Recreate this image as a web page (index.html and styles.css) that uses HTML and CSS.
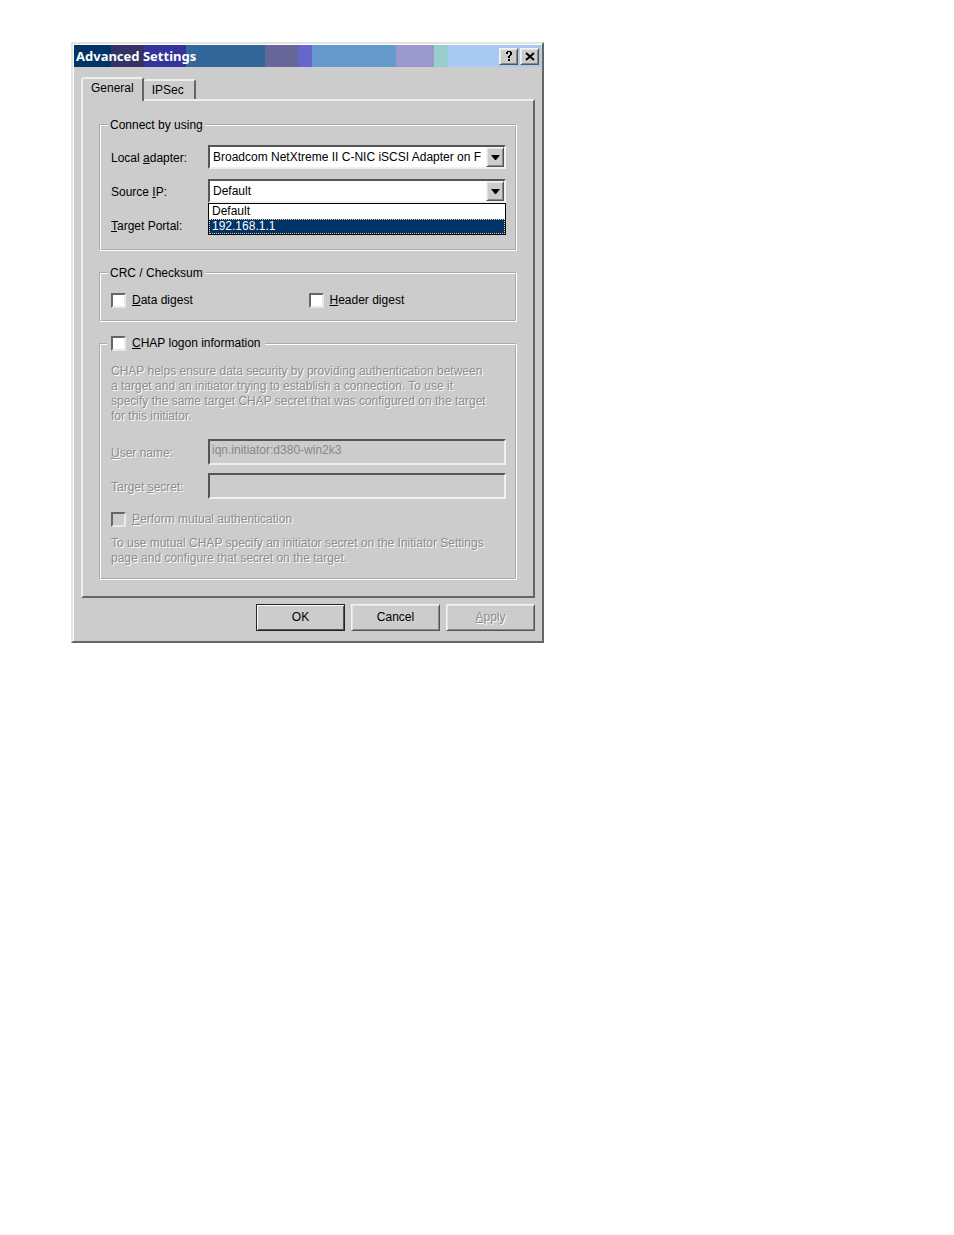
FILE: index.html
```html
<!DOCTYPE html>
<html lang="en">

<head>
    <meta charset="UTF-8">
    <meta name="viewport" content="width=device-width, initial-scale=1.0">
    <title>Advanced Settings</title>
    <link rel="stylesheet" href="styles.css">
</head>

<body>
    <form class="window" onsubmit="return false">
        <header class="titlebar">
            <h1 class="title">Advanced Settings</h1>
            <button type="button" class="title-btn" aria-label="Help">
                <svg width="8" height="11" viewBox="0 0 8 11" shape-rendering="crispEdges"><path d="M1 1h1V0h4v1h1v3H6v1H5v2H3V5h1V4h1V1H3v2H1zM3 8h2v2H3z"/></svg>
            </button>
            <button type="button" class="title-btn" aria-label="Close">
                <svg width="10" height="9" viewBox="0 0 10 9"><path d="M1 1l8 7M9 1L1 8" fill="none" stroke="#000" stroke-width="2"/></svg>
            </button>
        </header>

        <main class="content">
            <div class="tabs" role="tablist">
                <button type="button" class="tab active" role="tab" aria-selected="true">General</button>
                <button type="button" class="tab" role="tab" aria-selected="false">IPSec</button>
            </div>

            <div class="panel" role="tabpanel">
                <fieldset class="group">
                    <legend>Connect by using</legend>
                    <div class="fields connect">
                        <label for="adapter">Local <u>a</u>dapter:</label>
                        <div class="combo">
                            <select id="adapter">
                                <option>Broadcom NetXtreme II C-NIC iSCSI Adapter on F</option>
                            </select>
                            <span class="arrow"><svg width="9" height="5" viewBox="0 0 9 5"><path d="M0 0h9L5 5H4z"/></svg></span>
                        </div>
                        <label for="source">Source <u>I</u>P:</label>
                        <div class="combo">
                            <select id="source">
                                <option>Default</option>
                            </select>
                            <span class="arrow"><svg width="9" height="5" viewBox="0 0 9 5"><path d="M0 0h9L5 5H4z"/></svg></span>
                            <ul class="list" role="listbox" aria-label="Source IP">
                                <li role="option" aria-selected="false">Default</li>
                                <li class="selected" role="option" aria-selected="true">192.168.1.1</li>
                            </ul>
                        </div>
                        <span><u>T</u>arget Portal:</span>
                    </div>
                </fieldset>

                <fieldset class="group">
                    <legend>CRC / Checksum</legend>
                    <div class="checks">
                        <label class="check"><input type="checkbox"><span><u>D</u>ata digest</span></label>
                        <label class="check"><input type="checkbox"><span><u>H</u>eader digest</span></label>
                    </div>
                </fieldset>

                <fieldset class="group">
                    <legend class="check-legend">
                        <label class="check"><input type="checkbox"><span><u>C</u>HAP logon information</span></label>
                    </legend>
                    <p class="disabled">CHAP helps ensure data security by providing authentication between<br>
                        a target and an initiator trying to establish a connection. To use it<br>
                        specify the same target CHAP secret that was configured on the target<br>
                        for this initiator.</p>
                    <div class="fields chap">
                        <label class="disabled" for="user"><u>U</u>ser name:</label>
                        <input type="text" id="user" value="iqn.initiator:d380-win2k3" disabled>
                        <label class="disabled" for="secret">Target <u>s</u>ecret:</label>
                        <input type="password" id="secret" disabled>
                    </div>
                    <label class="check disabled mutual"><input type="checkbox" disabled><span><u>P</u>erform mutual authentication</span></label>
                    <p class="disabled">To use mutual CHAP specify an initiator secret on the Initiator Settings<br>
                        page and configure that secret on the target.</p>
                </fieldset>
            </div>

            <footer class="buttons">
                <button type="submit" class="btn default">OK</button>
                <button type="button" class="btn">Cancel</button>
                <button type="button" class="btn disabled" disabled><u>A</u>pply</button>
            </footer>
        </main>
    </form>
</body>

</html>
```
FILE: styles.css
```css
* {
    margin: 0;
    padding: 0;
    box-sizing: border-box;
}

body {
    background-color: #fff;
    color: #000;
    font: 12px/15px "Liberation Sans", Arial, sans-serif;
    padding: 42px 71px;
}

button,
input,
select {
    font: inherit;
    color: inherit;
    border-radius: 0;
    appearance: none;
    outline: none;
}

.window {
    max-width: 473px;
    padding: 1px;
    background-color: #ccc;
    border: 2px solid;
    border-color: #e4e4e0 #666 #666 #e4e4e0;
    box-shadow: inset 1px 1px #fff;
}

/* title bar */
.titlebar {
    display: flex;
    align-items: center;
    gap: 2px;
    height: 22px;
    padding: 0 2px;
    background: linear-gradient(to right,
        #003366 0 8%, #333366 8% 15%, #333399 15% 24%, #336699 24% 41%,
        #666699 41% 48%, #6666cc 48% 51%, #6699cc 51% 69%,
        #9999cc 69% 77%, #99cccc 77% 80%, #a6caf0 80%);
}

.title {
    flex: 1;
    color: #fff;
    font: bold 13px/22px "Noto Sans", Tahoma, sans-serif;
}

.title-btn {
    display: flex;
    align-items: center;
    justify-content: center;
    width: 19px;
    height: 17px;
}

.title-btn,
.btn,
.arrow {
    background-color: #ccc;
    border: 1px solid;
    border-color: #f4f4f4 #555 #555 #f4f4f4;
    box-shadow: inset 1px 1px #e4e4e4, inset -1px -1px #888;
}

.content {
    padding: 10px 6px 9px 7px;
}

/* tabs */
.tabs {
    display: flex;
    align-items: flex-end;
}

.tab {
    height: 20px;
    padding: 0 10px 0 8px;
    background-color: #ccc;
    border: 2px solid;
    border-color: #eee #666 #ccc #eee;
    border-bottom: none;
    border-radius: 3px 2px 0 0;
}

.tab + .tab {
    border-left: none;
}

.tab.active {
    position: relative;
    height: 24px;
    margin-bottom: -2px;
    padding: 0 8px 4px;
}

.panel {
    display: flex;
    flex-direction: column;
    gap: 14px;
    padding: 16px;
    border: 2px solid;
    border-color: #eee #666 #666 #eee;
}

/* group boxes */
.group {
    min-width: 0;
    padding: 12px 9px 12px 10px;
    border: 2px groove #fff;
}

legend {
    height: 16px;
    margin-left: -3px;
    padding: 0 2px;
    line-height: 17px;
}

.check-legend {
    margin-left: -4px;
    padding: 0 4px;
}

.fields {
    display: grid;
    grid-template-columns: 97px 1fr;
    align-items: center;
}

.fields > label,
.fields > span {
    padding-top: 2px;
}

.connect {
    grid-auto-rows: 24px;
    row-gap: 10px;
}

.combo {
    position: relative;
    min-width: 0;
}

select,
input[type="text"],
input[type="password"] {
    display: block;
    width: 100%;
    border: 2px solid;
    border-color: #555 #f0f0f0 #f0f0f0 #555;
}

select {
    height: 24px;
    padding: 0 19px 0 3px;
    background-color: #fff;
}

.arrow {
    position: absolute;
    top: 2px;
    right: 2px;
    bottom: 2px;
    width: 18px;
    display: flex;
    align-items: center;
    justify-content: center;
    pointer-events: none;
}

.list {
    position: absolute;
    top: 100%;
    left: 0;
    right: 0;
    z-index: 1;
    list-style: none;
    background-color: #fff;
    border: 1px solid #000;
}

.list li {
    height: 15px;
    padding: 0 3px;
}

.list .selected {
    background-color: #003366;
    color: #fff;
    outline: 1px dotted #fc9;
    outline-offset: -1px;
}

/* check boxes */
.checks {
    display: grid;
    grid-template-columns: 1fr 1fr;
}

.check {
    display: flex;
    align-items: center;
    gap: 6px;
    height: 15px;
    line-height: 17px;
}

input[type="checkbox"] {
    width: 15px;
    height: 15px;
    background-color: #fff;
    border: 2px solid;
    border-color: #666 #e8e8e8 #e8e8e8 #666;
}

input[type="checkbox"]:disabled {
    background-color: #ccc;
}

.disabled {
    color: #8c8c8c;
    text-shadow: 1px 1px #fff;
}

.chap {
    grid-auto-rows: 26px;
    row-gap: 8px;
    margin: 15px 0 13px;
}

.chap input {
    height: 26px;
    padding: 0 2px 4px;
    background-color: #ccc;
    color: #888;
}

.mutual {
    margin-bottom: 9px;
}

/* bottom buttons */
.buttons {
    display: flex;
    justify-content: flex-end;
    gap: 6px;
    margin-top: 6px;
}

.btn {
    width: 89px;
    height: 27px;
}

.btn.default {
    border-color: #222;
    box-shadow: inset 1px 1px #fff, inset -1px -1px #555;
}
```
